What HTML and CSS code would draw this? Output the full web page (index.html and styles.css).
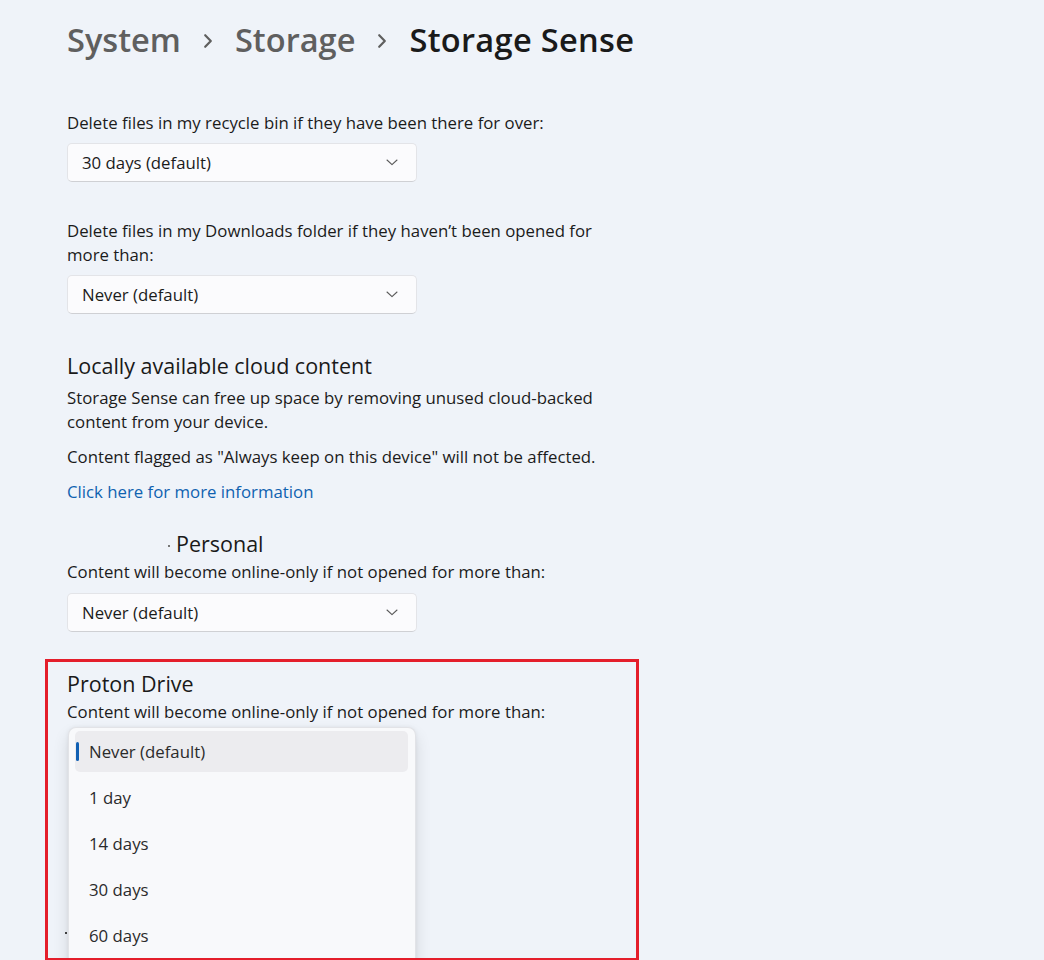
FILE: index.html
```html
<!DOCTYPE html>
<html lang="en">
<head>
<meta charset="utf-8">
<title>Storage Sense</title>
<link rel="stylesheet" href="styles.css">
</head>
<body>
<main class="page">
  <nav class="breadcrumb">
    <span class="crumb">System</span>
    <svg class="crumb-sep" width="10" height="16" viewBox="0 0 10 16"><path d="M2.2 2.2 L7.8 8 L2.2 13.8" fill="none" stroke="#5f5f5f" stroke-width="2.2" stroke-linecap="round" stroke-linejoin="round"/></svg>
    <span class="crumb">Storage</span>
    <svg class="crumb-sep" width="10" height="16" viewBox="0 0 10 16"><path d="M2.2 2.2 L7.8 8 L2.2 13.8" fill="none" stroke="#5f5f5f" stroke-width="2.2" stroke-linecap="round" stroke-linejoin="round"/></svg>
    <span class="crumb current">Storage Sense</span>
  </nav>

  <section class="setting first">
    <p class="label">Delete files in my recycle bin if they have been there for over:</p>
    <div class="combo">
      <span>30 days (default)</span>
      <svg class="chev" width="12" height="7" viewBox="0 0 12 7"><path d="M1 1 L6 5.6 L11 1" fill="none" stroke="#5a5a5a" stroke-width="1.1" stroke-linecap="round" stroke-linejoin="round"/></svg>
    </div>
  </section>

  <section class="setting">
    <p class="label">Delete files in my Downloads folder if they haven’t been opened for<br>more than:</p>
    <div class="combo">
      <span>Never (default)</span>
      <svg class="chev" width="12" height="7" viewBox="0 0 12 7"><path d="M1 1 L6 5.6 L11 1" fill="none" stroke="#5a5a5a" stroke-width="1.1" stroke-linecap="round" stroke-linejoin="round"/></svg>
    </div>
  </section>

  <section class="cloud">
    <h2 class="subtitle">Locally available cloud content</h2>
    <p class="text">Storage Sense can free up space by removing unused cloud-backed<br>content from your device.</p>
    <p class="text spaced">Content flagged as "Always keep on this device" will not be affected.</p>
    <a class="link spaced" href="#">Click here for more information</a>
  </section>

  <section class="provider">
    <div class="provider-head">
      <span class="icon-slot"><span class="dot"></span></span>
      <h3 class="subtitle">Personal</h3>
    </div>
    <p class="text">Content will become online-only if not opened for more than:</p>
    <div class="combo">
      <span>Never (default)</span>
      <svg class="chev" width="12" height="7" viewBox="0 0 12 7"><path d="M1 1 L6 5.6 L11 1" fill="none" stroke="#5a5a5a" stroke-width="1.1" stroke-linecap="round" stroke-linejoin="round"/></svg>
    </div>
  </section>

  <section class="provider highlight">
    <h3 class="subtitle">Proton Drive</h3>
    <p class="text">Content will become online-only if not opened for more than:</p>
    <div class="menu-anchor">
      <ul class="menu">
        <li class="item selected">Never (default)</li>
        <li class="item">1 day</li>
        <li class="item">14 days</li>
        <li class="item">30 days</li>
        <li class="item">60 days</li>
      </ul>
      <span class="stray-dot"></span>
    </div>
  </section>
</main>
</body>
</html>
```
FILE: styles.css
```css
html, body {
  margin: 0;
  padding: 0;
  background: #eff3f9;
  height: 960px;
  overflow: hidden;
}

body {
  font-family: "Segoe UI", "Open Sans", "Noto Sans", sans-serif;
  color: #1b1b1b;
}

.page {
  padding: 20px 0 0 67px;
}

.breadcrumb {
  display: flex;
  align-items: center;
  height: 40px;
  gap: 22px;
  white-space: nowrap;
  width: max-content;
}

.crumb {
  font-size: 32.6px;
  font-weight: 600;
  color: #5f5f5f;
  line-height: 40px;
}

.crumb.current {
  color: #1a1a1a;
  letter-spacing: 0.3px;
}

.crumb-sep {
  margin-top: 2px;
}

p {
  margin: 0;
}

.label, .text, .link {
  font-size: 16.8px;
  line-height: 24px;
  white-space: nowrap;
}

.setting.first {
  margin-top: 51px;
}

.setting {
  margin-top: 37px;
}

.label {
  margin-bottom: 8px;
}

.combo {
  width: 348px;
  height: 37px;
  box-sizing: content-box;
  background: #fbfbfd;
  border: 1px solid #e3e4e8;
  border-bottom-color: #cfd0d4;
  border-radius: 5px;
  display: flex;
  align-items: center;
  justify-content: space-between;
  padding: 0;
  font-size: 16.8px;
  color: #1b1b1b;
}

.combo span {
  padding-left: 14px;
}

.combo .chev {
  margin-right: 18px;
}

.cloud {
  margin-top: 36px;
}

.subtitle {
  margin: 0;
  font-size: 21.5px;
  font-weight: 400;
  line-height: 32px;
  color: #1a1a1a;
}

.cloud .subtitle {
  margin-bottom: 4px;
}

.spaced {
  margin-top: 11px;
}

.link {
  display: block;
  width: max-content;
  color: #0f62b0;
  text-decoration: none;
}

.provider {
  margin-top: 24px;
}

.provider-head {
  display: flex;
  align-items: center;
}

.icon-slot {
  width: 109px;
  height: 32px;
  position: relative;
  flex: none;
}

.dot {
  position: absolute;
  left: 101px;
  top: 17px;
  width: 1.5px;
  height: 1.5px;
  background: #777;
}

.provider .combo {
  margin-top: 9px;
}

.provider.highlight {
  position: relative;
  margin-top: 27px;
  margin-left: -22px;
  padding: 9px 0 0 22px;
  height: 293px;
  width: 572px;
}

.provider.highlight::after {
  content: "";
  position: absolute;
  left: 0;
  top: 0;
  right: 0;
  bottom: 0;
  border: 3px solid #e41e2b;
  pointer-events: none;
  z-index: 3;
}

.menu-anchor {
  position: relative;
  height: 4px;
}

.menu {
  position: absolute;
  left: 1px;
  top: 3px;
  width: 348px;
  height: 260px;
  margin: 0;
  padding: 3px 7px 0 6px;
  box-sizing: border-box;
  list-style: none;
  background: #f8f9fb;
  border: 1px solid #e2e3e7;
  border-bottom: none;
  border-radius: 8px 8px 0 0;
  box-shadow: 0 8px 16px rgba(0, 0, 0, 0.12), 0 0 4px rgba(0, 0, 0, 0.06);
  z-index: 2;
}

.item {
  position: relative;
  height: 41px;
  line-height: 41px;
  padding-left: 14px;
  margin-bottom: 5px;
  font-size: 16.8px;
  color: #2b2b2b;
  border-radius: 5px;
}

.item.selected {
  background: #ececef;
}

.item.selected::before {
  content: "";
  position: absolute;
  left: 1px;
  top: 11px;
  width: 3px;
  height: 19px;
  border-radius: 2px;
  background: #1160b3;
}

.stray-dot {
  position: absolute;
  left: -2px;
  top: 208px;
  width: 2px;
  height: 2px;
  background: #444;
  z-index: 1;
}
```
